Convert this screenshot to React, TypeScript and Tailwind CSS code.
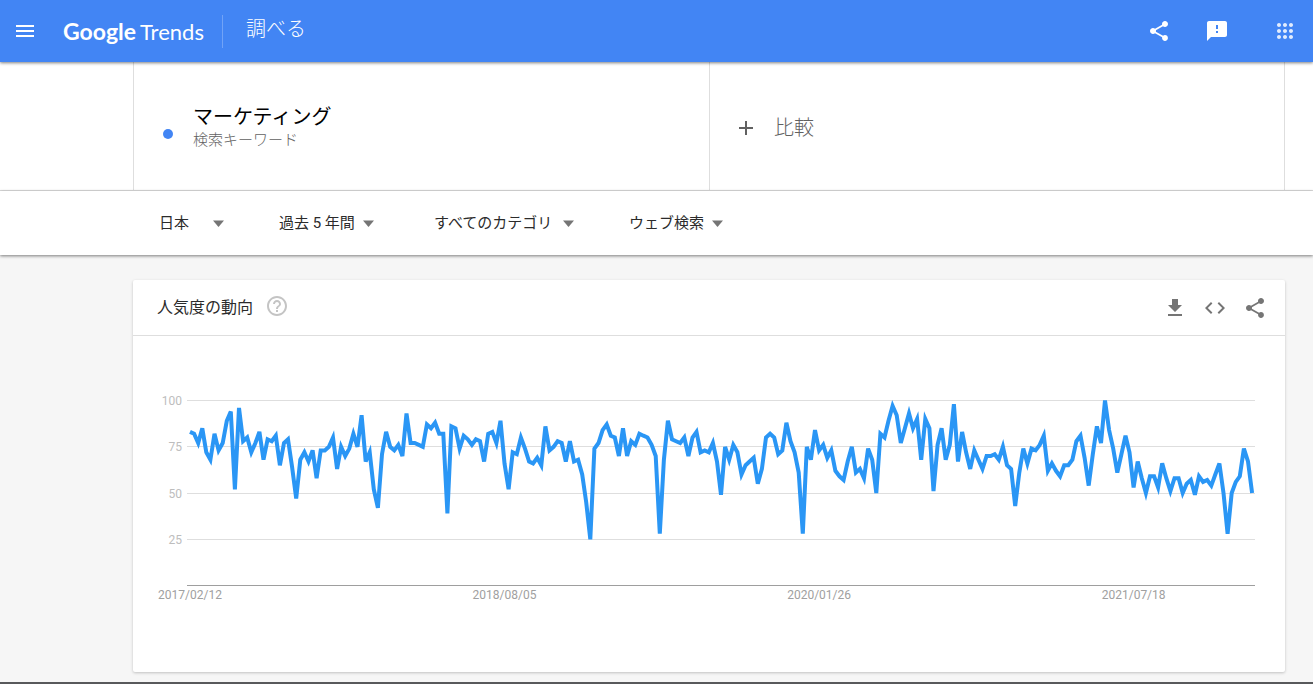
import React from "react";

// Weekly interest values, oldest first
const INTEREST = [
  83, 82, 77, 85, 72, 68, 82, 73, 77, 89, 94, 52, 96, 78, 80, 72, 77, 83, 68, 79,
  78, 81, 65, 77, 79, 64, 47, 68, 72, 67, 73, 58, 73, 73, 75, 80, 63, 75, 70, 74,
  82, 75, 92, 67, 72, 52, 42, 71, 83, 75, 73, 76, 70, 93, 77, 77, 76, 75, 87, 85,
  88, 82, 82, 39, 86, 85, 74, 81, 79, 76, 79, 78, 67, 82, 83, 77, 89, 66, 52, 72,
  71, 80, 74, 67, 66, 69, 65, 86, 73, 75, 78, 77, 67, 78, 67, 68, 60, 45, 25, 74,
  77, 84, 87, 81, 80, 70, 85, 70, 78, 76, 82, 81, 80, 76, 70, 28, 68, 89, 79, 78,
  77, 80, 70, 80, 83, 72, 73, 72, 77, 67, 49, 75, 68, 76, 72, 60, 65, 67, 69, 55,
  63, 80, 82, 80, 71, 73, 88, 78, 72, 61, 28, 75, 68, 84, 73, 76, 69, 73, 62, 59,
  57, 67, 75, 61, 63, 58, 74, 68, 50, 82, 80, 89, 97, 92, 77, 85, 93, 85, 90, 68,
  90, 85, 51, 76, 85, 68, 76, 98, 67, 83, 72, 63, 73, 68, 63, 70, 70, 71, 68, 75,
  65, 63, 43, 61, 74, 66, 74, 73, 76, 81, 62, 66, 62, 59, 65, 65, 68, 78, 81, 69,
  54, 71, 86, 77, 100, 84, 74, 61, 71, 81, 72, 53, 67, 58, 50, 59, 59, 53, 66, 58,
  51, 58, 58, 50, 55, 57, 49, 59, 56, 57, 54, 60, 66, 50, 28, 50, 56, 59, 74, 67,
  50,
];

const GRID = [
  { label: "100", y: 15.5 },
  { label: "75", y: 61.5 },
  { label: "50", y: 108.5 },
  { label: "25", y: 154.5 },
];

const DATES = [
  { label: "2017/02/12", week: 0 },
  { label: "2018/08/05", week: 77 },
  { label: "2020/01/26", week: 154 },
  { label: "2021/07/18", week: 231 },
];

const FILTERS = [
  { name: "地域", value: "日本", cell: "w-[120px]", select: "w-[54px]" },
  { name: "期間", value: "過去 5 年間", cell: "w-[155px]", select: "w-[84px]" },
  { name: "カテゴリ", value: "すべてのカテゴリ", cell: "w-[195px]", select: "w-[129px]" },
  { name: "検索の種類", value: "ウェブ検索", cell: "w-[120px]", select: "w-[83px]" },
];

const ICONS = {
  menu: "M3 18h18v-2H3v2zm0-5h18v-2H3v2zm0-7v2h18V6H3z",
  share:
    "M18 16.08c-.76 0-1.44.3-1.96.77L8.91 12.7c.05-.23.09-.46.09-.7s-.04-.47-.09-.7l7.05-4.11c.54.5 1.25.81 2.04.81 1.66 0 3-1.34 3-3s-1.34-3-3-3-3 1.34-3 3c0 .24.04.47.09.7L8.04 9.81C7.5 9.31 6.79 9 6 9c-1.66 0-3 1.34-3 3s1.34 3 3 3c.79 0 1.5-.31 2.04-.81l7.12 4.16c-.05.21-.08.43-.08.65 0 1.61 1.31 2.92 2.92 2.92s2.92-1.31 2.92-2.92-1.31-2.92-2.92-2.92z",
  feedback:
    "M20 2H4c-1.1 0-1.99.9-1.99 2L2 22l4-4h14c1.1 0 2-.9 2-2V4c0-1.1-.9-2-2-2zm-7 12h-2v-2h2v2zm0-4h-2V6h2v4z",
  apps: "M6 8c1.1 0 2-.9 2-2s-.9-2-2-2-2 .9-2 2 .9 2 2 2zm6 12c1.1 0 2-.9 2-2s-.9-2-2-2-2 .9-2 2 .9 2 2 2zm-6 0c1.1 0 2-.9 2-2s-.9-2-2-2-2 .9-2 2 .9 2 2 2zm0-6c1.1 0 2-.9 2-2s-.9-2-2-2-2 .9-2 2 .9 2 2 2zm6 0c1.1 0 2-.9 2-2s-.9-2-2-2-2 .9-2 2 .9 2 2 2zm4-8c0 1.1.9 2 2 2s2-.9 2-2-.9-2-2-2-2 .9-2 2zm-4 2c1.1 0 2-.9 2-2s-.9-2-2-2-2 .9-2 2 .9 2 2 2zm6 6c1.1 0 2-.9 2-2s-.9-2-2-2-2 .9-2 2 .9 2 2 2zm0 6c1.1 0 2-.9 2-2s-.9-2-2-2-2 .9-2 2 .9 2 2 2z",
  add: "M19 13h-6v6h-2v-6H5v-2h6V5h2v6h6v2z",
  help: "M11 18h2v-2h-2v2zm1-16C6.48 2 2 6.48 2 12s4.48 10 10 10 10-4.48 10-10S17.52 2 12 2zm0 18c-4.41 0-8-3.59-8-8s3.59-8 8-8 8 3.59 8 8-3.59 8-8 8zm0-14c-2.21 0-4 1.79-4 4h2c0-1.1.9-2 2-2s2 .9 2 2c0 2-3 1.75-3 5h2c0-2.25 3-2.5 3-5 0-2.21-1.79-4-4-4z",
  download: "M19 9h-4V3H9v6H5l7 7 7-7zM5 18v2h14v-2H5z",
  code: "M9.4 16.6L4.8 12l4.6-4.6L8 6l-6 6 6 6 1.4-1.4zm5.2 0l4.6-4.6-4.6-4.6L16 6l6 6-6 6-1.4-1.4z",
};

function Icon({ name }: { name: keyof typeof ICONS }) {
  return (
    <svg viewBox="0 0 24 24" className="w-6 h-6" fill="currentColor" aria-hidden="true">
      <path d={ICONS[name]} />
    </svg>
  );
}

function IconButton({ name, label, className = "" }: { name: keyof typeof ICONS; label: string; className?: string }) {
  return (
    <button type="button" aria-label={label} className={`shrink-0 cursor-pointer ${className}`}>
      <Icon name={name} />
    </button>
  );
}

const weekX = (week: number) => 33 + week * 4.085;

function InterestChart() {
  const points = INTEREST.map((v, i) => `${weekX(i).toFixed(1)},${(200.5 - v * 1.85).toFixed(1)}`).join(" ");

  return (
    <svg viewBox="0 0 1104 220" className="block w-full font-[Roboto,sans-serif] text-[12px]" role="img" aria-label="人気度の動向">
      {GRID.map((line) => (
        <g key={line.label}>
          <line x1="30" x2="1098" y1={line.y} y2={line.y} stroke="#dedede" />
          <text x="25" y={line.y + 4} textAnchor="end" fill="#bdbdbd">
            {line.label}
          </text>
        </g>
      ))}
      <line x1="30" x2="1098" y1="200.5" y2="200.5" stroke="#9e9e9e" />
      <polyline points={points} fill="none" stroke="#2a96f5" strokeWidth="4" />
      {DATES.map((date) => (
        <text key={date.label} x={weekX(date.week)} y="214" textAnchor="middle" fill="#a0a0a0">
          {date.label}
        </text>
      ))}
    </svg>
  );
}

export default function App() {
  return (
    <div className="flex min-h-screen flex-col bg-[#f6f6f6] font-[Roboto,'Noto_Sans_CJK_JP',sans-serif] text-[#2b2b2b]">
      <header className="relative z-10 flex h-[62px] items-center bg-[#4285f4] pl-[13px] pr-4 text-white shadow-[0_1px_3px_rgba(0,0,0,0.5)]">
        <IconButton name="menu" label="メニュー" />
        <a href="#" className="ml-[26px] flex items-baseline gap-1 font-[Lato,sans-serif] text-[22px] leading-8">
          <span className="text-[23px] font-bold">Google</span>
          <span>Trends</span>
        </a>
        <div className="ml-[18px] h-[33px] w-px bg-white/25" />
        <h1 className="ml-[23px] pb-1 text-[20px] font-light leading-7">調べる</h1>
        <div className="ml-auto flex items-center">
          <IconButton name="share" label="共有" />
          <IconButton name="feedback" label="フィードバックを送信" className="ml-[34px]" />
          <IconButton name="apps" label="Google アプリ" className="ml-11 opacity-85" />
        </div>
      </header>

      <section className="grid h-[129px] grid-cols-2 border-b border-[#dedede] bg-white pl-[133px] pr-7">
        <div className="flex items-center border-l border-[#dedede] pl-[29px] pt-1">
          <span className="mt-3 h-[10px] w-[10px] rounded-full bg-[#4285f4]" />
          <div className="ml-5">
            <h2 className="text-[20px] leading-6 text-black">マーケティング</h2>
            <p className="text-[15px] font-light leading-[22px] text-[#616161]">検索キーワード</p>
          </div>
        </div>
        <button
          type="button"
          className="flex cursor-pointer items-center gap-4 border-x border-[#dedede] pl-6 pt-1 text-[20px] font-light text-[#616161]"
        >
          <Icon name="add" />
          比較
        </button>
      </section>

      <section className="relative flex h-16 items-center bg-white pl-[159px] shadow-[0_1px_3px_rgba(0,0,0,0.5)]">
        {FILTERS.map((filter) => (
          <label key={filter.name} className={`flex items-center ${filter.cell}`}>
            <select
              aria-label={filter.name}
              className={`h-8 cursor-pointer appearance-none bg-transparent text-[15px] outline-none ${filter.select}`}
            >
              <option>{filter.value}</option>
            </select>
            <svg viewBox="0 0 11 7" className="h-[7px] w-[11px]" fill="#757575" aria-hidden="true">
              <path d="M0 0.5h11L5.5 7z" />
            </svg>
          </label>
        ))}
      </section>

      <main className="flex-1 pb-[10px] pl-[133px] pr-7 pt-[25px]">
        <article className="rounded-[2px] bg-white pb-[67px] shadow-[0_1px_3px_rgba(0,0,0,0.22)]">
          <div className="flex h-14 items-center border-b border-[#dedede] pl-6 pr-[18px]">
            <h2 className="text-[16px] leading-6">人気度の動向</h2>
            <IconButton name="help" label="ヘルプ" className="ml-3 pb-1 text-[#c4c4c4]" />
            <div className="ml-auto flex items-center gap-4 text-[#757575]">
              <IconButton name="download" label="CSV をダウンロード" />
              <IconButton name="code" label="埋め込み" />
              <IconButton name="share" label="共有" />
            </div>
          </div>
          <div className="px-6 pt-[49px]">
            <InterestChart />
          </div>
        </article>
      </main>
      <div className="h-[2px] bg-[#58595b]" />
    </div>
  );
}
